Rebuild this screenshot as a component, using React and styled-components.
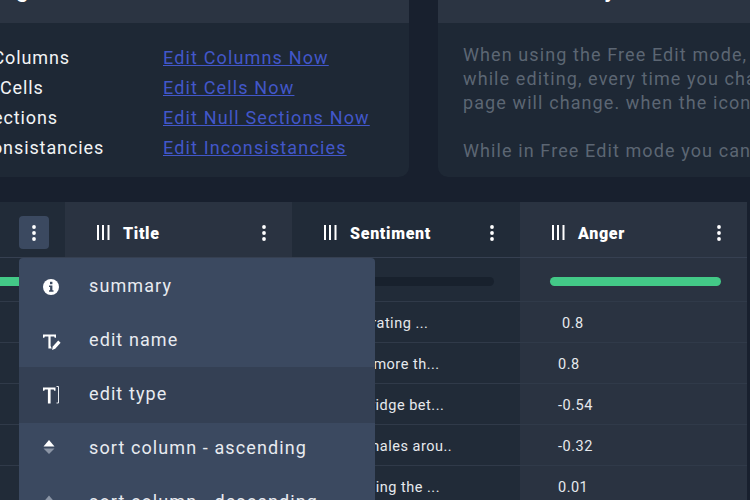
import React from 'react';
import styled, { createGlobalStyle } from 'styled-components';

const Global = createGlobalStyle`
  html, body { margin: 0; padding: 0; height: 100%; overflow: hidden; background: #18202e; }
  body { font-family: Roboto, "Liberation Sans", sans-serif; }
`;

const Viewport = styled.div`
  width: 750px;
  height: 500px;
  overflow: hidden;
  background: #18202e;
`;
const Page = styled.div`
  margin-top: -40px;
  margin-left: -100px;
  width: 1160px;
  display: flex;
  flex-direction: column;
  gap: 25px;
`;
const Cards = styled.div`
  display: flex;
  gap: 29px;
`;
const Card = styled.section`
  width: ${p => p.$w}px;
  height: 217px;
  background: #1e2835;
  border-radius: 0 0 10px 10px;
  overflow: hidden;
`;
const CardHeader = styled.div`
  height: 63px;
  background: #2b3442;
  padding: 15px 0 0 ${p => p.$pad}px;
  box-sizing: border-box;
  font-size: 22px;
  line-height: 30px;
  font-weight: 700;
  color: #fff;
  white-space: nowrap;
`;
const StatGrid = styled.div`
  display: grid;
  grid-template-columns: 198px auto;
  justify-content: start;
  padding: 20px 0 0 65px;
  grid-auto-rows: 30px;
  font-size: 18px;
  line-height: 30px;
`;
const Label = styled.span`
  color: #f2f4f6;
  white-space: nowrap;
  letter-spacing: 0.9px;
`;
const EditLink = styled.a`
  color: #4257c9;
  text-decoration: underline;
  justify-self: start;
  white-space: nowrap;
  letter-spacing: 1.15px;
`;
const Help = styled.div`
  padding: 20px 0 0 25px;
  color: #5c6673;
  font-size: 18px;
  line-height: 24px;
  letter-spacing: 1.1px;
  white-space: nowrap;
`;
const HelpGap = styled.div`
  height: 24px;
`;
const TableWrap = styled.div`
  position: relative;
  display: grid;
  grid-template-columns: 165px 227px 228px 227px;
  width: 850px;
  height: 298px;
`;
const Column = styled.div`
  display: flex;
  flex-direction: column;
  background: ${p => (p.$light ? '#2a3341' : '#212b38')};
`;
const HeaderCell = styled.div`
  height: 56px;
  box-sizing: border-box;
  display: flex;
  align-items: center;
  padding: 6px ${p => p.$right}px 0 32px;
  color: #fff;
  font-size: 16px;
  font-weight: 900;
  letter-spacing: 0.7px;
  border-bottom: 1px solid #364051;
`;
const HeaderTitle = styled.span`
  margin-left: 13px;
  padding-top: 2px;
  flex: 1;
`;
const Kebab = styled.button`
  width: 30px;
  height: 33px;
  border: 0;
  padding: 0;
  border-radius: 4px;
  display: flex;
  align-items: center;
  justify-content: center;
  background: ${p => (p.$active ? '#3b4960' : 'transparent')};
  color: #fff;
`;
const FilterCell = styled.div`
  height: 44px;
  box-sizing: border-box;
  display: flex;
  align-items: center;
  padding: 3px 26px 0 30px;
  border-bottom: 1px solid #303a49;
`;
const Bar = styled.div`
  flex: 1;
  height: 9px;
  border-radius: 5px;
  background: ${p => (p.$on ? '#43c987' : '#18212d')};
`;
const Cell = styled.div`
  height: 41px;
  box-sizing: border-box;
  display: flex;
  align-items: center;
  padding: 2px 0 0 38px;
  color: #e6e9ed;
  font-size: 14.5px;
  letter-spacing: 0.5px;
  white-space: pre;
  border-bottom: 1px solid #303a49;
`;
const Menu = styled.div`
  position: absolute;
  left: 119px;
  top: 56px;
  width: 356px;
  height: 300px;
  background: #3b4960;
  border-radius: 4px 4px 0 0;
  overflow: hidden;
`;
const MenuItem = styled.div`
  height: 54px;
  display: flex;
  align-items: center;
  gap: 28px;
  padding-left: 22px;
  color: #e8ebf0;
  font-size: 18px;
  letter-spacing: 1.1px;
  ${p => p.$hover && `
    background: linear-gradient(transparent 1px, #344054 1px);
    box-shadow: 0 3px 0 #344054;
  `}
`;
const MenuLabel = styled.span`
  position: relative;
`;
const MenuIcon = styled.svg`
  width: 20px;
  height: 20px;
  flex: none;
  margin-top: 4px;
`;

const Dots = () => (
  <svg width="4" height="16" viewBox="0 0 4 16" fill="currentColor">
    <circle cx="2" cy="2" r="1.9" /><circle cx="2" cy="8" r="1.9" /><circle cx="2" cy="14" r="1.9" />
  </svg>
);
const Grip = () => (
  <svg width="13" height="15" viewBox="0 0 13 15" fill="#fff">
    <rect x="0" width="2" height="15" /><rect x="5" width="2" height="15" /><rect x="10.5" width="2" height="15" />
  </svg>
);
const Header = ({ title }) => (
  <HeaderCell $right={13}>
    <Grip />
    <HeaderTitle>{title}</HeaderTitle>
    <Kebab><Dots /></Kebab>
  </HeaderCell>
);

const InfoIcon = () => (
  <MenuIcon viewBox="0 0 20 20">
    <circle cx="10" cy="10" r="8" fill="#fff" />
    <rect x="9" y="4.8" width="2.4" height="2.4" fill="#3b4960" />
    <path d="M8 8.6h3.4v4.6h1.1v1.5H8v-1.5h1.1v-3.1H8z" fill="#3b4960" />
  </MenuIcon>
);
const EditNameIcon = () => (
  <MenuIcon viewBox="0 0 20 20">
    <path d="M2 3.5h13v3.3h-1.3l-.5-1.2H9.6V15l1.2 2.5H7.4V5.6H3.8l-.5 1.2H2z" fill="#fff" />
    <path d="M11.8 15.6l5.4-6 2.4 2.1-5.4 6-3.2 1.2z" fill="#fff" />
  </MenuIcon>
);
const EditTypeIcon = () => (
  <MenuIcon viewBox="0 0 20 20">
    <path d="M2 2.5h12.5v3.3h-1.3l-.5-1.2H9.6V18.500H6.900V4.600H3.800l-.5 1.200H2z" fill="#fff" />
    <path d="M15.500 1.500h2v16.500h-2" fill="none" stroke="#e8ebf0" strokeWidth="1" />
  </MenuIcon>
);
const SortIcon = ({ down }) => (
  <MenuIcon viewBox="0 0 20 20">
    <path d={down ? 'M2.500 9l5.500-6.500 5.500 6.500z' : 'M2.500 7.500l5.500-6.500 5.500 6.500z'} fill={down ? '#8b95a5' : '#fff'} />
    <path d={down ? 'M2.500 11l5.500 5.500 5.500-5.500z' : 'M2.500 9.500l5.500 5.500 5.500-5.500z'} fill={down ? '#fff' : '#8b95a5'} />
  </MenuIcon>
);

const sentiments = ['Exhilarating ...', 'Some more th...', 'Cambridge bet...', 'The whales arou..', 'Swindling the ...'];
const titles = ['Some title', 'Some title', 'Some title', 'Some title', 'Some title'];
const values = [' 0.8', '0.8', '-0.54', '-0.32', '0.01'];

export default function App() {
  return (
    <Viewport>
      <Global />
      <Page>
        <Cards>
          <Card $w={509}>
            <CardHeader $pad={42}>Cleaning</CardHeader>
            <StatGrid>
              <Label>12 Columns</Label><EditLink href="#">Edit Columns Now</EditLink>
              <Label>Old Cells</Label><EditLink href="#">Edit Cells Now</EditLink>
              <Label>8 Sections</Label><EditLink href="#">Edit Null Sections Now</EditLink>
              <Label>Inconsistancies</Label><EditLink href="#">Edit Inconsistancies</EditLink>
            </StatGrid>
          </Card>
          <Card $w={500}>
            <CardHeader $pad={25}>Just Edit Freely</CardHeader>
            <Help>
              When using the Free Edit mode, you can<br />
              while editing, every time you change<br />
              page will change. when the icon is<br />
              <HelpGap />
              While in Free Edit mode you can
            </Help>
          </Card>
        </Cards>
        <TableWrap>
          <Column>
            <HeaderCell $right={16}>
              <HeaderTitle />
              <Kebab $active><Dots /></Kebab>
            </HeaderCell>
            <FilterCell><Bar $on /></FilterCell>
            {values.map((_, i) => <Cell key={i} />)}
          </Column>
          <Column $light>
            <Header title="Title" />
            <FilterCell><Bar $on /></FilterCell>
            {titles.map((t, i) => <Cell key={i}>{t}</Cell>)}
          </Column>
          <Column>
            <Header title="Sentiment" />
            <FilterCell><Bar /></FilterCell>
            {sentiments.map((t, i) => <Cell key={i}>{t}</Cell>)}
          </Column>
          <Column $light>
            <Header title="Anger" />
            <FilterCell><Bar $on /></FilterCell>
            {values.map((t, i) => <Cell key={i}>{t}</Cell>)}
          </Column>
          <Menu>
            <MenuItem><InfoIcon /><MenuLabel>summary</MenuLabel></MenuItem>
            <MenuItem><EditNameIcon /><MenuLabel>edit name</MenuLabel></MenuItem>
            <MenuItem $hover><EditTypeIcon /><MenuLabel>edit type</MenuLabel></MenuItem>
            <MenuItem><SortIcon /><MenuLabel>sort column - ascending</MenuLabel></MenuItem>
            <MenuItem><SortIcon down /><MenuLabel>sort column - descending</MenuLabel></MenuItem>
          </Menu>
        </TableWrap>
      </Page>
    </Viewport>
  );
}
